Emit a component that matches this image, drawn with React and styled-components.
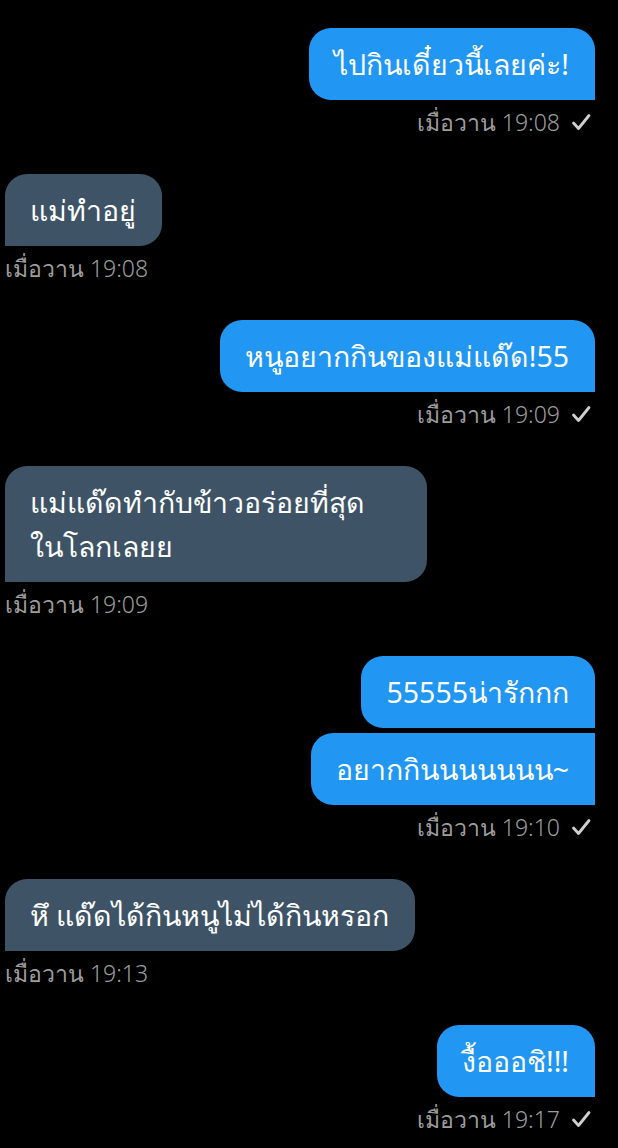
import styled, { createGlobalStyle } from "styled-components";

const GlobalStyle = createGlobalStyle`
  html, body {
    margin: 0;
    padding: 0;
    background: #000;
  }
  body {
    font-family: "Noto Sans", "DejaVu Sans", sans-serif;
  }
`;

const Chat = styled.div`
  display: flex;
  flex-direction: column;
  gap: 38px;
  padding: 28px 23px 0 5px;
  width: 618px;
  height: 1148px;
  box-sizing: border-box;
  background: #000;
`;

const Group = styled.div`
  display: flex;
  flex-direction: column;
  align-items: ${(p) => (p.$mine ? "flex-end" : "flex-start")};
  gap: 5px;
`;

const Bubble = styled.div`
  box-sizing: border-box;
  width: ${(p) => (p.$width ? `${p.$width}px` : "auto")};
  background: ${(p) => (p.$mine ? "#2196f3" : "#3e5466")};
  color: #fff;
  font-size: 28.5px;
  line-height: 44px;
  padding: 14px 26px 14px 25px;
  white-space: pre-line;
  border-radius: ${(p) =>
    p.$mine
      ? p.$first
        ? "22px 22px 0 22px"
        : "22px 0 0 22px"
      : "22px 22px 22px 0"};
`;

const Meta = styled.div`
  display: flex;
  align-items: center;
  gap: 11px;
  margin-top: 3px;
  padding-right: ${(p) => (p.$mine ? "4px" : "0")};
  color: #9d9d9d;
  font-size: 23px;
  line-height: 28px;
  font-weight: 300;
`;

const Check = styled.svg`
  width: 20px;
  height: 18px;
  color: #cfcfcf;
`;

const messages = [
  { mine: true, texts: ["ไปกินเดี๋ยวนี้เลยค่ะ!"], time: "19:08" },
  { mine: false, texts: ["แม่ทำอยู่"], time: "19:08" },
  { mine: true, texts: ["หนูอยากกินของแม่แด๊ด!55"], time: "19:09" },
  {
    mine: false,
    texts: ["แม่แด๊ดทำกับข้าวอร่อยที่สุด\nในโลกเลยย"],
    width: 422,
    time: "19:09",
  },
  { mine: true, texts: ["55555น่ารักกก", "อยากกินนนนนนน~"], time: "19:10" },
  { mine: false, texts: ["หึ แด๊ดได้กินหนูไม่ได้กินหรอก"], time: "19:13" },
  { mine: true, texts: ["งื้อออชิ!!!"], time: "19:17" },
];

function Tick() {
  return (
    <Check viewBox="0 0 20 18" fill="none">
      <path
        d="M2.5 10 L7.5 15.5 L18 2.5"
        stroke="currentColor"
        strokeWidth="2.8"
        strokeLinecap="round"
        strokeLinejoin="round"
      />
    </Check>
  );
}

export default function App() {
  return (
    <>
      <GlobalStyle />
      <Chat>
        {messages.map((m, i) => (
          <Group key={i} $mine={m.mine}>
            {m.texts.map((t, j) => (
              <Bubble key={j} $mine={m.mine} $first={j === 0} $width={m.width}>
                {t}
              </Bubble>
            ))}
            <Meta $mine={m.mine}>
              <span>เมื่อวาน {m.time}</span>
              {m.mine && <Tick />}
            </Meta>
          </Group>
        ))}
      </Chat>
    </>
  );
}
